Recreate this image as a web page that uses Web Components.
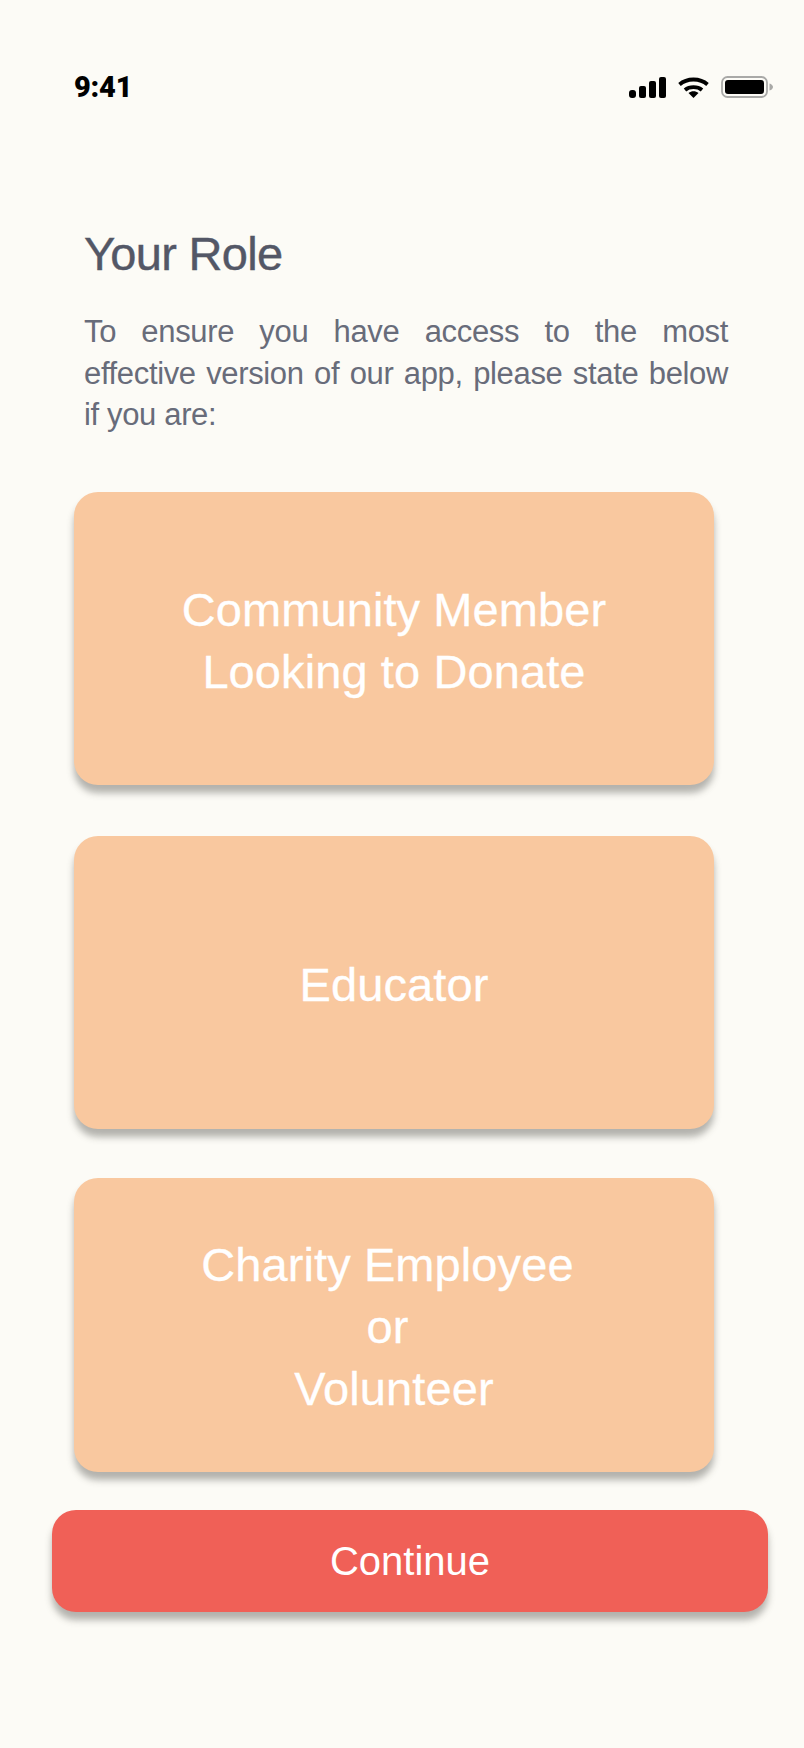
<!DOCTYPE html>
<html>
<head>
<meta charset="utf-8">
<title>Your Role</title>
<style>
  html, body { margin: 0; background: #fcfbf6; }
  body { font-family: "Liberation Sans", sans-serif; }
</style>
</head>
<body>
<role-screen>
  <status-bar slot="status"></status-bar>
  <role-intro slot="intro" heading="Your Role">To ensure you have access to the most effective version of our app, please state below if you are:</role-intro>
  <role-card>Community Member<br>Looking to Donate</role-card>
  <role-card>Educator</role-card>
  <role-card>Charity Employee&nbsp;<br>or&nbsp;<br>Volunteer</role-card>
  <continue-button slot="action">Continue</continue-button>
</role-screen>

<script>
class RoleScreen extends HTMLElement {
  constructor() {
    super();
    this.attachShadow({ mode: 'open' });
    this.shadowRoot.innerHTML = `
      <style>
        :host {
          display: flex;
          flex-direction: column;
          width: 804px;
          height: 1748px;
          box-sizing: border-box;
          background: #fcfbf6;
        }
        .cards {
          display: flex;
          flex-direction: column;
          gap: 49px;
          margin: 56px 0 0 74px;
          width: 640px;
        }
        ::slotted(role-card:nth-of-type(2)) { margin-top: 2px; }
        ::slotted(role-card:nth-of-type(3)) { height: 294px; }
      </style>
      <slot name="status"></slot>
      <slot name="intro"></slot>
      <div class="cards"><slot></slot></div>
      <slot name="action"></slot>
    `;
  }
}

class StatusBar extends HTMLElement {
  constructor() {
    super();
    this.attachShadow({ mode: 'open' });
    this.shadowRoot.innerHTML = `
      <style>
        :host {
          display: flex;
          align-items: center;
          justify-content: space-between;
          height: 26px;
          margin-top: 74px;
          padding: 0 31px 0 74px;
        }
        .time {
          font: 900 29px/26px "Roboto", sans-serif;
          color: #000;
          letter-spacing: -0.2px;
        }
        .icons { display: flex; align-items: center; gap: 12px; }
        svg { display: block; }
      </style>
      <span class="time">9:41</span>
      <div class="icons">
        <svg width="37" height="21" viewBox="0 0 37 21">
          <rect x="0" y="13" width="7" height="8" rx="3"/>
          <rect x="10" y="9" width="7" height="12" rx="2"/>
          <rect x="20" y="4" width="7" height="17" rx="2"/>
          <rect x="30" y="0" width="7" height="21" rx="2"/>
        </svg>
        <svg width="31" height="21" viewBox="0 0 31 21">
          <path d="M1.500 7.500C9 .8 22 .8 29.500 7.500" fill="none" stroke="#000" stroke-width="3.800"/>
          <path d="M7 13C11.500 9.200 19.500 9.200 24 13" fill="none" stroke="#000" stroke-width="3.800"/>
          <path d="M10.500 16C13.500 13.600 17.500 13.600 20.500 16L15.500 21Z"/>
        </svg>
        <svg width="52" height="22" viewBox="0 0 52 22">
          <rect x="1" y="1" width="45" height="20" rx="5.500" fill="none" stroke="#a9a9a7" stroke-width="1.800"/>
          <rect x="4" y="4" width="39" height="14" rx="3"/>
          <path d="M48.500 7.500C50.500 8 52 9.500 52 11S50.500 14 48.500 14.500Z" fill="#a9a9a7"/>
        </svg>
      </div>
    `;
  }
}

class RoleIntro extends HTMLElement {
  constructor() {
    super();
    this.attachShadow({ mode: 'open' });
    this.shadowRoot.innerHTML = `
      <style>
        :host { display: block; margin: 126px 0 0 84px; width: 644px; }
        h1 {
          margin: 0;
          font: 400 47px/56px "Liberation Sans", sans-serif;
          color: #535766;
          letter-spacing: -0.7px;
          -webkit-text-stroke: 0.4px #535766;
        }
        p {
          margin: 29px 0 0;
          font: 400 31px/41.7px "Liberation Sans", sans-serif;
          color: #686c7a;
          text-align: justify;
          letter-spacing: -0.35px;
        }
      </style>
      <h1></h1>
      <p><slot></slot></p>
    `;
  }

  connectedCallback() {
    this.shadowRoot.querySelector('h1').textContent = this.getAttribute('heading');
  }
}

class RoleCard extends HTMLElement {
  constructor() {
    super();
    this.attachShadow({ mode: 'open' });
    this.shadowRoot.innerHTML = `
      <style>
        :host {
          display: flex;
          align-items: center;
          justify-content: center;
          height: 293px;
          background: #f9c89f;
          border-radius: 24px;
          box-shadow: 0 8px 7px rgba(60, 60, 55, 0.38);
          color: #fff;
          text-align: center;
          font: 400 47px/62px "Liberation Sans", sans-serif;
          letter-spacing: 0.1px;
          -webkit-text-stroke: 0.3px #fff;
        }
        div { padding-top: 4px; }
      </style>
      <div><slot></slot></div>
    `;
  }
}

class ContinueButton extends HTMLElement {
  constructor() {
    super();
    this.attachShadow({ mode: 'open' });
    this.shadowRoot.innerHTML = `
      <style>
        :host {
          display: flex;
          align-items: center;
          justify-content: center;
          width: 716px;
          height: 102px;
          margin: 38px 0 0 52px;
          background: #f06057;
          border-radius: 24px;
          box-shadow: 0 8px 7px rgba(60, 60, 55, 0.38);
          color: #fff;
          font: 400 40px/46px "Liberation Sans", sans-serif;
        }
      </style>
      <slot></slot>
    `;
  }
}

customElements.define('role-screen', RoleScreen);
customElements.define('status-bar', StatusBar);
customElements.define('role-intro', RoleIntro);
customElements.define('role-card', RoleCard);
customElements.define('continue-button', ContinueButton);
</script>
</body>
</html>
